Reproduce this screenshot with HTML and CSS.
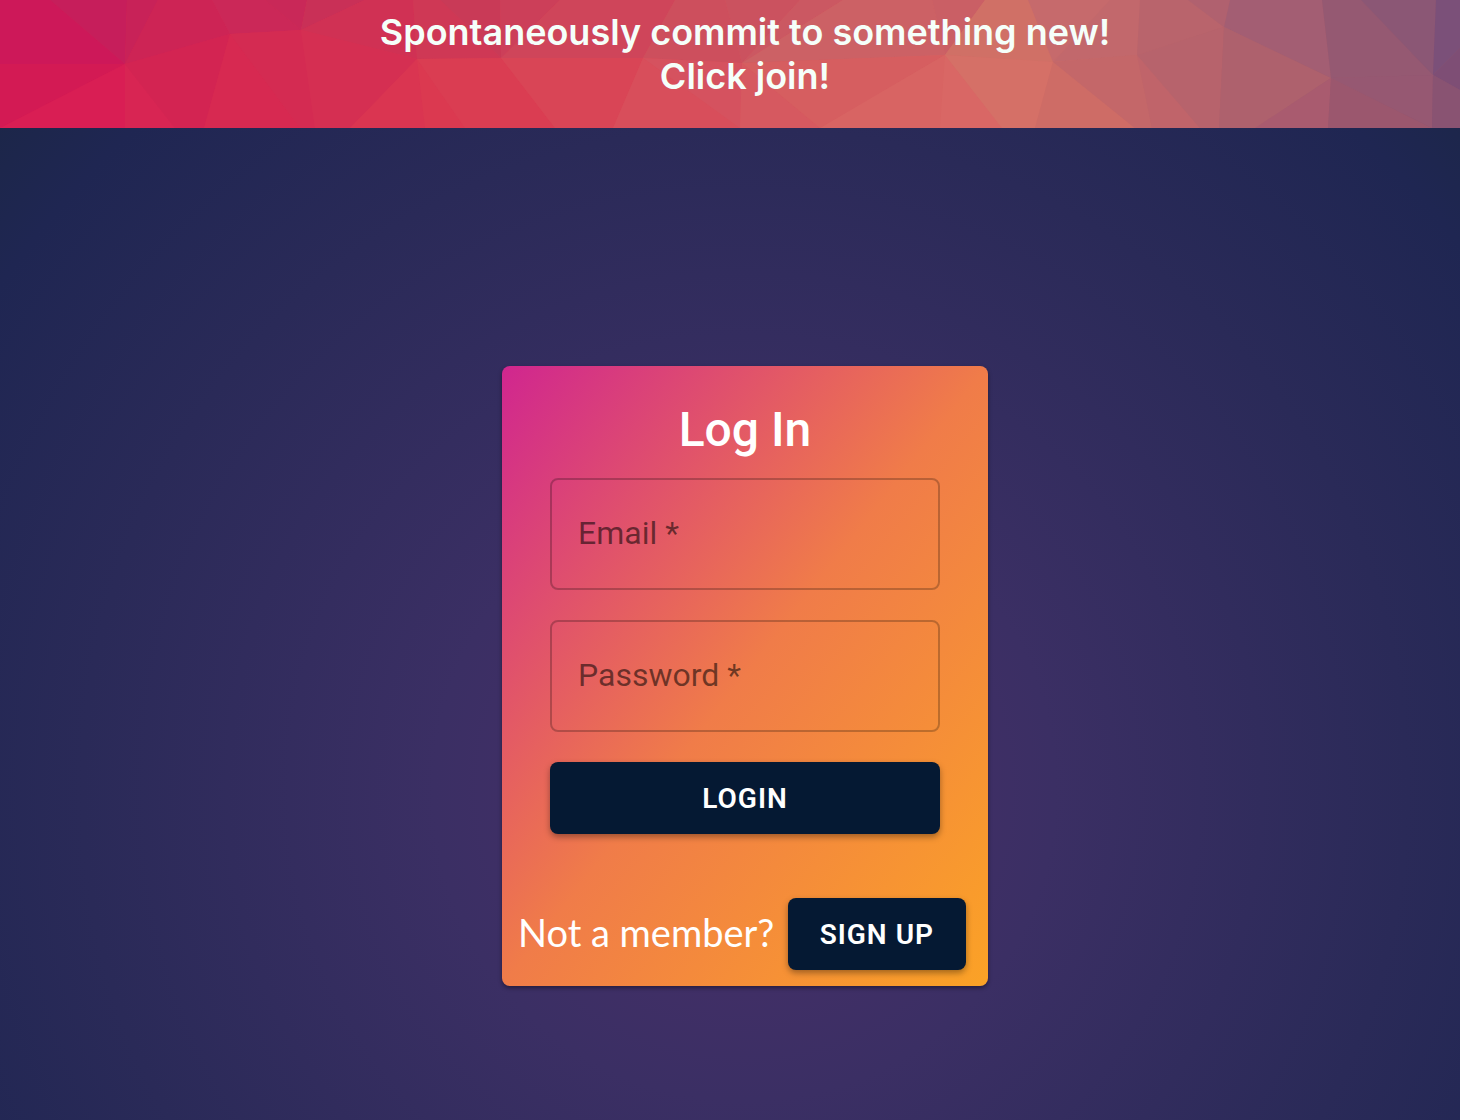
FILE: index.html
```html
<!DOCTYPE html>
<html lang="en">
<head>
<meta charset="utf-8">
<title>Log In</title>
<meta name="viewport" content="width=device-width, initial-scale=1">
<link rel="stylesheet" href="styles.css">
</head>
<body>
<header class="banner">
<svg class="banner-art" viewBox="0 0 1460 128" preserveAspectRatio="none" aria-hidden="true">
<polygon fill="#cd1859" points="0,0 50,0 125,64 0,64"/>
<polygon fill="#c61e5b" points="50,0 127,0 125,64"/>
<polygon fill="#c82258" points="127,0 158,0 125,64"/>
<polygon fill="#cd2455" points="158,0 212,0 230,34 125,64"/>
<polygon fill="#cb2858" points="212,0 265,0 301,30 230,34"/>
<polygon fill="#c92858" points="265,0 307,0 301,30"/>
<polygon fill="#c93057" points="307,0 365,0 301,30"/>
<polygon fill="#d03154" points="365,0 413,0 417,59 301,30"/>
<polygon fill="#cf3855" points="413,0 440,0 501,58 417,59"/>
<polygon fill="#c93a57" points="440,0 500,0 501,58"/>
<polygon fill="#cc3f59" points="500,0 560,0 501,58"/>
<polygon fill="#cf455a" points="560,0 675,0 643,58 501,58"/>
<polygon fill="#cd4f5d" points="675,0 725,0 742,63 643,58"/>
<polygon fill="#cb525f" points="725,0 800,0 742,63"/>
<polygon fill="#cb5862" points="800,0 843,0 742,63"/>
<polygon fill="#cc6165" points="843,0 932,0 945,55 742,63"/>
<polygon fill="#ca5f65" points="932,0 985,0 945,55"/>
<polygon fill="#d07066" points="985,0 1028,0 1053,62 945,55"/>
<polygon fill="#c66a6c" points="1028,0 1110,0 1053,62"/>
<polygon fill="#c2686c" points="1110,0 1140,0 1137,55 1053,62"/>
<polygon fill="#b9646c" points="1140,0 1188,0 1224,27 1137,55"/>
<polygon fill="#b0616f" points="1188,0 1230,0 1224,27"/>
<polygon fill="#a35e73" points="1230,0 1322,0 1331,78 1224,27"/>
<polygon fill="#955972" points="1322,0 1361,0 1433,75 1331,78"/>
<polygon fill="#8b5775" points="1361,0 1436,0 1433,75"/>
<polygon fill="#7b5079" points="1436,0 1460,0 1460,48 1433,75"/>
<polygon fill="#7e4e75" points="1460,48 1460,90 1433,75"/>
<polygon fill="#d31a54" points="0,64 125,64 0,128"/>
<polygon fill="#d91e54" points="0,128 125,64 125,128"/>
<polygon fill="#d82553" points="125,64 175,128 125,128"/>
<polygon fill="#d32452" points="125,64 230,34 204,128 175,128"/>
<polygon fill="#d72951" points="230,34 300,128 204,128"/>
<polygon fill="#d42b52" points="230,34 301,30 315,128 300,128"/>
<polygon fill="#d52f52" points="301,30 417,59 350,128 315,128"/>
<polygon fill="#da3551" points="417,59 350,128 425,128"/>
<polygon fill="#db3950" points="417,59 425,128 465,128"/>
<polygon fill="#da3d52" points="417,59 501,58 555,128 465,128"/>
<polygon fill="#d94556" points="501,58 643,58 613,128 555,128"/>
<polygon fill="#d84e5b" points="643,58 740,128 613,128"/>
<polygon fill="#d5525f" points="643,58 742,63 740,128"/>
<polygon fill="#d65960" points="742,63 820,128 740,128"/>
<polygon fill="#d65e60" points="742,63 945,55 820,128"/>
<polygon fill="#d86463" points="945,55 940,128 820,128"/>
<polygon fill="#d96765" points="945,55 1002,128 940,128"/>
<polygon fill="#d57067" points="945,55 1053,62 1035,128 1002,128"/>
<polygon fill="#ce6c66" points="1053,62 1135,128 1035,128"/>
<polygon fill="#c46769" points="1053,62 1137,55 1152,128 1135,128"/>
<polygon fill="#c0646a" points="1137,55 1200,128 1152,128"/>
<polygon fill="#b7636c" points="1137,55 1224,27 1219,128 1200,128"/>
<polygon fill="#ae616d" points="1224,27 1331,78 1255,128 1219,128"/>
<polygon fill="#a95b6f" points="1331,78 1328,128 1255,128"/>
<polygon fill="#9b576e" points="1331,78 1432,128 1328,128"/>
<polygon fill="#965872" points="1331,78 1433,75 1432,128"/>
<polygon fill="#895372" points="1433,75 1460,90 1460,128 1432,128"/>
</svg>
<h1 class="banner-text">Spontaneously commit to something new!<br>Click join!</h1>
</header>
<main class="page">
<section class="card">
<form class="login">
<h2 class="login-title">Log In</h2>
<div class="field">
<input class="field-input" id="email" type="email" required>
<label class="field-label" for="email">Email *</label>
</div>
<div class="field">
<input class="field-input" id="password" type="password" required>
<label class="field-label" for="password">Password *</label>
</div>
<button class="button" type="submit">LOGIN</button>
</form>
<div class="signup">
<p class="signup-text">Not a member?</p>
<button class="button" type="button">SIGN UP</button>
</div>
</section>
</main>
</body>
</html>
```
FILE: styles.css
```css
* {
  box-sizing: border-box;
}

body {
  display: flex;
  flex-direction: column;
  min-height: 100vh;
  margin: 0;
  font-family: Roboto, sans-serif;
  background: #1b2649;
}

.banner {
  display: grid;
  height: 128px;
  overflow: hidden;
  background: linear-gradient(to right, #d31a54, #db4454 40%, #d57067 70%, #895372);
}

.banner-art {
  grid-area: 1 / 1;
  width: 100%;
  height: 128px;
}

.banner-text {
  grid-area: 1 / 1;
  z-index: 1;
  margin: 0;
  padding: 10px 0 0 30px;
  color: #f5fffa;
  font-family: Inter, sans-serif;
  font-size: 36px;
  font-weight: 600;
  line-height: 44px;
  text-align: center;
}

.page {
  flex: 1;
  display: flex;
  justify-content: center;
  align-items: flex-start;
  padding: 238px 0 134px 30px;
  background: radial-gradient(circle at 51% 662px, #452f66 0, #402f66 200px, #3b2f64 310px, #2a2a58 662px, #1f2652 900px, #1c2649 1000px);
}

.card {
  width: 486px;
  border-radius: 8px;
  background: linear-gradient(to bottom right, #d0268f, #f07c49 50%, #fba226);
  box-shadow: 0 2px 4px rgba(0, 0, 0, 0.4);
}

.login {
  display: flex;
  flex-direction: column;
  gap: 30px;
  padding: 32px 48px 64px;
}

.login-title {
  margin: 0 0 -14px;
  color: #fff;
  font-size: 48px;
  font-weight: 500;
  line-height: 64px;
  text-align: center;
}

.field {
  display: grid;
  align-items: center;
}

.field-input {
  grid-area: 1 / 1;
  width: 100%;
  height: 112px;
  padding: 0 28px;
  border: 2px solid rgba(0, 0, 0, 0.23);
  border-radius: 8px;
  background: transparent;
  color: rgba(0, 0, 0, 0.87);
  font: 32px/40px Roboto, sans-serif;
}

.field-label {
  grid-area: 1 / 1;
  padding: 0 28px 2px;
  color: rgba(0, 0, 0, 0.54);
  font-size: 32px;
  line-height: 40px;
  pointer-events: none;
}

.field-input:focus + .field-label,
.field-input:valid + .field-label {
  visibility: hidden;
}

.button {
  height: 72px;
  padding: 2px 32px 0;
  border: 0;
  border-radius: 8px;
  background: #051933;
  box-shadow: 0 3px 6px rgba(0, 0, 0, 0.35);
  color: #fff;
  font: 600 28px/48px Roboto, sans-serif;
  cursor: pointer;
}

.login .button,
.signup .button {
  letter-spacing: 1px;
}

.signup {
  display: flex;
  align-items: center;
  justify-content: space-between;
  padding: 0 22px 16px 16px;
}

.signup-text {
  margin: 0;
  padding-bottom: 4px;
  color: #fff;
  font-family: Lato, sans-serif;
  font-size: 38px;
  line-height: 40px;
}
```
